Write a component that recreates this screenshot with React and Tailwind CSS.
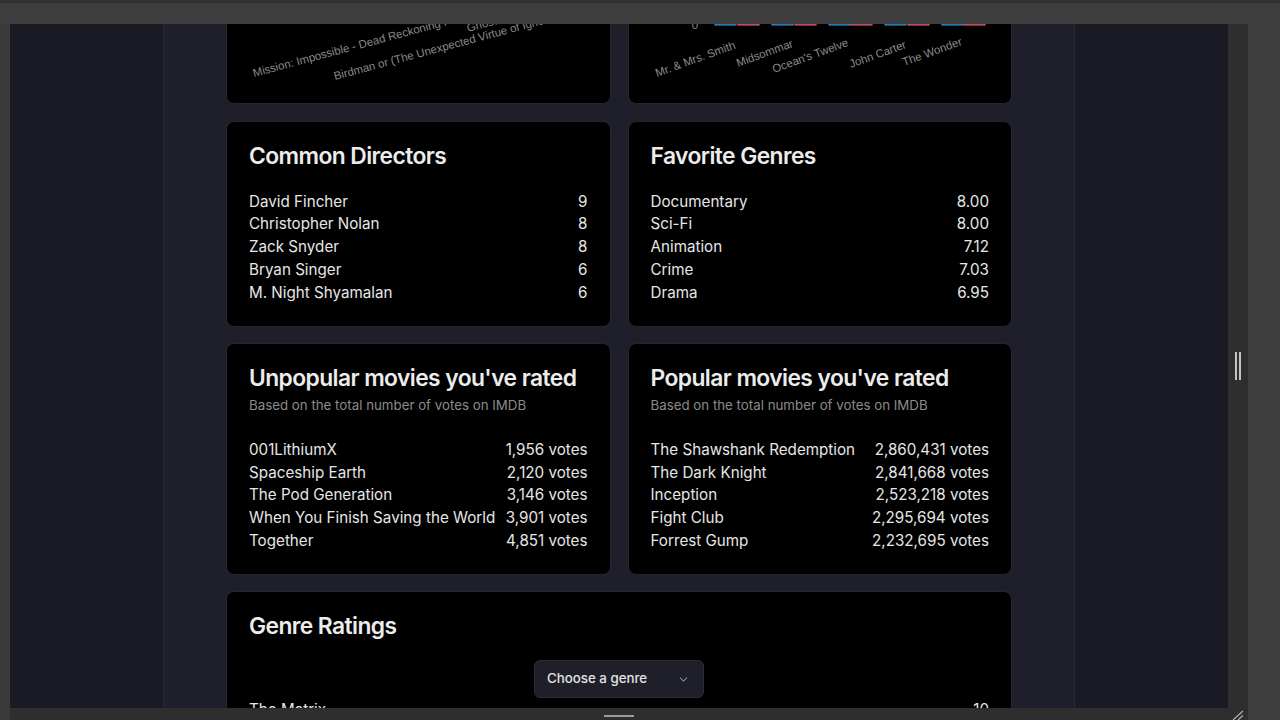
import React from "react";
import { ChevronDown } from "lucide-react";

const directors = [
  ["David Fincher", "9"],
  ["Christopher Nolan", "8"],
  ["Zack Snyder", "8"],
  ["Bryan Singer", "6"],
  ["M. Night Shyamalan", "6"],
];

const genres = [
  ["Documentary", "8.00"],
  ["Sci-Fi", "8.00"],
  ["Animation", "7.12"],
  ["Crime", "7.03"],
  ["Drama", "6.95"],
];

const unpopular = [
  ["001LithiumX", "1,956 votes"],
  ["Spaceship Earth", "2,120 votes"],
  ["The Pod Generation", "3,146 votes"],
  ["When You Finish Saving the World", "3,901 votes"],
  ["Together", "4,851 votes"],
];

const popular = [
  ["The Shawshank Redemption", "2,860,431 votes"],
  ["The Dark Knight", "2,841,668 votes"],
  ["Inception", "2,523,218 votes"],
  ["Fight Club", "2,295,694 votes"],
  ["Forrest Gump", "2,232,695 votes"],
];

// bar pairs of the partly scrolled-away chart (card coords)
const bars = [
  [86, 109],
  [143, 166],
  [200, 222],
  [256, 279],
  [313, 335],
];

const Card = ({ children, className = "pb-[20.4px]" }) => (
  <div className={`bg-black border border-[#262630] rounded-[8px] px-[22px] pt-[23px] ${className}`}>
    {children}
  </div>
);

const Title = ({ children }) => (
  <h2 className="text-[22.8px] leading-[22.8px] font-semibold tracking-tight text-[#ececec] whitespace-nowrap">
    {children}
  </h2>
);

const Subtitle = () => (
  <p className="mt-[6px] text-[13.3px] leading-[19px] text-[#8b8b8b]">
    Based on the total number of votes on IMDB
  </p>
);

const Rows = ({ rows }) => (
  <div className="flex flex-col">
    {rows.map(([name, value]) => (
      <div key={name} className="flex justify-between gap-2 text-[15.2px] leading-[22.8px] text-[#e6e6e6] whitespace-nowrap">
        <span className="min-w-0">{name}</span>
        <span className="shrink-0">{value}</span>
      </div>
    ))}
  </div>
);

const ChartLabel = ({ x, y, angle, children }) => (
  <text
    x={x}
    y={y}
    transform={`rotate(${angle} ${x} ${y})`}
    fill="#8a8a8a"
    fontSize="11.4"
    fontFamily="'Liberation Sans', Arial, sans-serif"
  >
    {children}
  </text>
);

const TopLeftChart = () => (
  <div className="relative h-[200px] bg-black border border-[#262630] rounded-[8px] overflow-hidden">
    <svg className="absolute inset-0" width="384" height="200">
      <ChartLabel x={27} y={172} angle={-15}>Mission: Impossible - Dead Reckoning Part One</ChartLabel>
      <ChartLabel x={108} y={175} angle={-15}>Birdman or (The Unexpected Virtue of Ignorance)</ChartLabel>
      <ChartLabel x={241} y={127} angle={-15}>Ghostbusters: Afterlife</ChartLabel>
    </svg>
  </div>
);

const TopRightChart = () => (
  <div className="relative h-[200px] bg-black border border-[#262630] rounded-[8px] overflow-hidden">
    <svg className="absolute inset-0" width="385" height="200">
      <text x={69} y={124} textAnchor="end" fill="#8a8a8a" fontSize="11.4" fontFamily="'Liberation Sans', Arial, sans-serif">
        0
      </text>
      {bars.map(([b, r]) => (
        <g key={b}>
          <rect x={b} y={60} width={21} height={60} fill="rgba(54,162,235,0.5)" stroke="rgb(54,162,235)" />
          <rect x={r} y={70} width={21} height={50} fill="rgba(255,99,132,0.5)" stroke="rgb(255,99,132)" />
        </g>
      ))}
      <ChartLabel x={28} y={172} angle={-20}>Mr. &amp; Mrs. Smith</ChartLabel>
      <ChartLabel x={109} y={162} angle={-20}>Midsommar</ChartLabel>
      <ChartLabel x={145} y={168} angle={-20}>Ocean's Twelve</ChartLabel>
      <ChartLabel x={222} y={163} angle={-20}>John Carter</ChartLabel>
      <ChartLabel x={275} y={161} angle={-20}>The Wonder</ChartLabel>
    </svg>
  </div>
);

export default function App() {
  return (
    <div
      className="h-screen w-full flex flex-col overflow-hidden bg-[#3c3c3c]"
      style={{ fontFamily: "Inter, 'Noto Sans', sans-serif" }}
    >
      {/* window top bar */}
      <div className="h-[24px] shrink-0 bg-[#3d3d3d] border-t-[3px] border-[#303030]" />

      <div className="flex flex-1 min-h-0">
        <div className="w-[10px] shrink-0 bg-[#3a3a3a]" />

        <div className="flex-1 flex flex-col min-w-0">
          <div className="flex flex-1 min-h-0">
            {/* page viewport, scrolled down a bit */}
            <div className="flex-1 min-w-0 overflow-hidden bg-[#191a24]">
              <div className="mx-auto w-[912px] h-full flex flex-col bg-[#1f1f2b] border-x border-[#2a2a36]">
                <div className="w-[786px] mx-auto -mt-[120px] grid grid-cols-2 gap-x-[17px] gap-y-[16.5px]">
                  <TopLeftChart />
                  <TopRightChart />

                  <Card className="pb-[21px]">
                    <Title>Common Directors</Title>
                    <div className="mt-[23.4px]">
                      <Rows rows={directors} />
                    </div>
                  </Card>
                  <Card className="pb-[21px]">
                    <Title>Favorite Genres</Title>
                    <div className="mt-[23.4px]">
                      <Rows rows={genres} />
                    </div>
                  </Card>

                  <Card className="pb-[21.2px]">
                    <Title>Unpopular movies you've rated</Title>
                    <Subtitle />
                    <div className="mt-[23.8px]">
                      <Rows rows={unpopular} />
                    </div>
                  </Card>
                  <Card className="pb-[21.2px]">
                    <Title>Popular movies you've rated</Title>
                    <Subtitle />
                    <div className="mt-[23.8px]">
                      <Rows rows={popular} />
                    </div>
                  </Card>

                  <Card className="col-span-2 pb-[21px]">
                    <Title>Genre Ratings</Title>
                    <div className="mt-[22.2px] flex justify-center">
                      <button className="w-[170px] h-[38px] flex items-center justify-between pl-[12px] pr-[13px] bg-[#1f1f2a] border border-[#2c2c38] rounded-[6px] text-[13.3px] font-medium text-[#e3e3e3]">
                        <span>Choose a genre</span>
                        <ChevronDown size={13} className="text-[#8a8a8a]" />
                      </button>
                    </div>
                    <div className="mt-[1px]">
                      <Rows rows={[["The Matrix", "10"]]} />
                    </div>
                  </Card>
                </div>
              </div>
            </div>

            {/* scrollbar gutter */}
            <div className="w-[20px] shrink-0 bg-[#2e2e2e] flex items-center justify-center">
              <div className="flex gap-[1.5px]">
                <div className="w-[2.5px] h-[28px] bg-[#c4c4c4]" />
                <div className="w-[2.5px] h-[28px] bg-[#c4c4c4]" />
              </div>
            </div>
          </div>

          {/* bottom bar */}
          <div className="h-[12px] shrink-0 bg-[#2e2e2e] flex items-end">
            <div className="flex-1 flex justify-center">
              <div className="w-[30px] h-[2px] mb-[3px] bg-[#9a9a9a]" />
            </div>
            <svg width="20" height="12" className="shrink-0">
              <line x1="5" y1="12" x2="15" y2="3" stroke="#b0b0b0" strokeWidth="1.2" />
              <line x1="10" y1="12" x2="15" y2="7.5" stroke="#b0b0b0" strokeWidth="1.2" />
            </svg>
          </div>
        </div>

        <div className="w-[32px] shrink-0 bg-[#3e3e3e]" />
      </div>
    </div>
  );
}
